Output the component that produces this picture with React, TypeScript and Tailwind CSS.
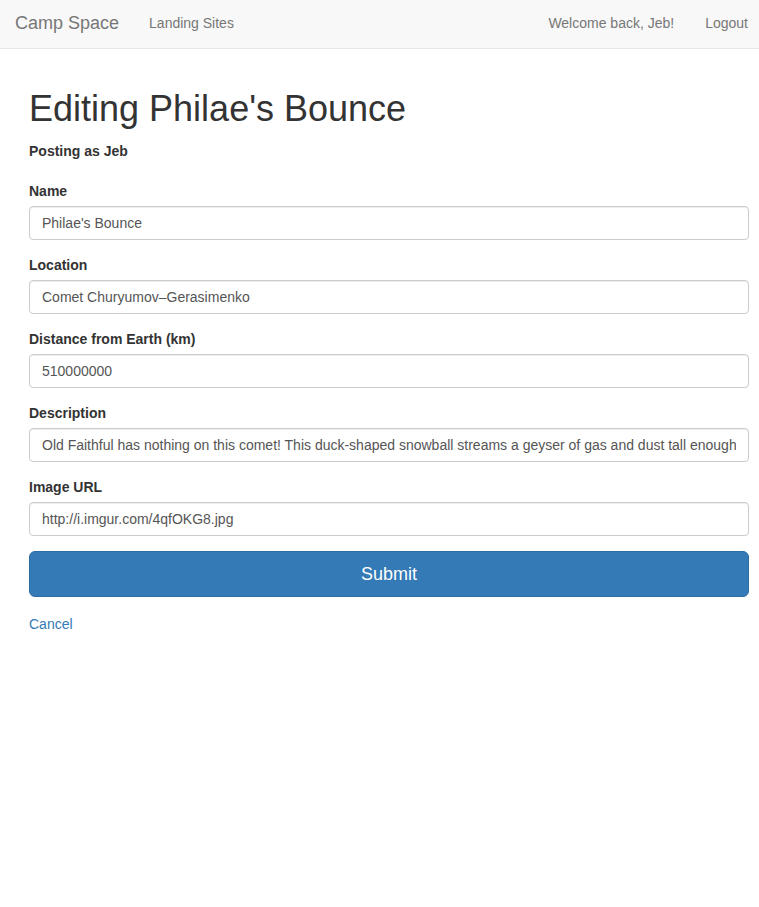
import React from "react";

const inputCls =
  "block w-full h-[34px] px-[12px] py-[6px] text-[14px] leading-[20px] text-[#555] bg-white border border-[#ccc] rounded-[4px] shadow-[inset_0_1px_1px_rgba(0,0,0,0.075)] outline-none";

function Field({ label, value }: { label: string; value: string }) {
  return (
    <div className="mb-[15px]">
      <label className="block text-[14px] leading-[20px] font-bold text-[#333] mb-[5px]">{label}</label>
      <input className={inputCls} defaultValue={value} readOnly />
    </div>
  );
}

export default function App() {
  return (
    <div className="min-h-[907px] bg-white text-[#333]" style={{ fontFamily: '"Liberation Sans", Arial, Helvetica, sans-serif' }}>
      <nav className="h-[49px] pb-[2px] bg-[#f8f8f8] border-b border-[#e7e7e7] flex items-center justify-between">
        <div className="flex items-center">
          <a className="pl-[15px] pr-[30px] text-[18px] leading-[20px] text-[#777]">Camp Space</a>
          <a className="text-[14px] leading-[20px] text-[#777]">Landing Sites</a>
        </div>
        <div className="flex items-center pr-[11px] gap-[31px]">
          <a className="text-[14px] leading-[20px] text-[#777]">Welcome back, Jeb!</a>
          <a className="text-[14px] leading-[20px] text-[#777]">Logout</a>
        </div>
      </nav>
      <main className="pl-[29px] pr-[10px]">
        <h1 className="mt-[40px] text-[36px] leading-[1.1] font-normal text-[#333]">Editing Philae's Bounce</h1>
        <p className="mt-[12px] text-[14px] leading-[20px] font-bold">Posting as Jeb</p>
        <form className="mt-[20px]">
          <Field label="Name" value="Philae's Bounce" />
          <Field label="Location" value="Comet Churyumov–Gerasimenko" />
          <Field label="Distance from Earth (km)" value="510000000" />
          <Field
            label="Description"
            value="Old Faithful has nothing on this comet! This duck-shaped snowball streams a geyser of gas and dust tall enough to dwarf any mountain on Earth."
          />
          <Field label="Image URL" value="http://i.imgur.com/4qfOKG8.jpg" />
          <div className="mb-[15px]">
            <button
              type="button"
              className="block w-full h-[46px] text-[18px] leading-[24px] text-white bg-[#337ab7] border border-[#2e6da4] rounded-[6px]"
            >
              Submit
            </button>
          </div>
        </form>
        <a className="text-[14px] leading-[20px] text-[#337ab7]">Cancel</a>
      </main>
    </div>
  );
}
